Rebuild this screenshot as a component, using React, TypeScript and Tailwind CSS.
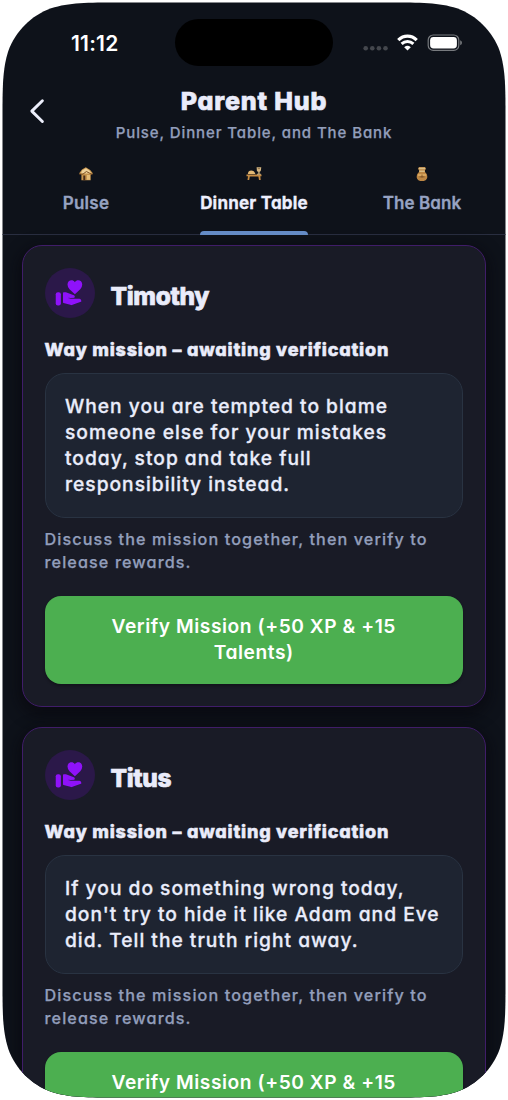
import React from "react";

function StatusBar() {
  return (
    <div className="flex h-[84px] items-start">
      <div className="w-[175px] pl-[71px] pt-[30px] font-['Inter'] text-[21px] leading-[27px] font-semibold tracking-[0.2px] text-white">11:12</div>
      <div className="mt-[19px] h-[47px] w-[158px] rounded-full bg-black" />
      <div className="ml-[30px] mt-[34px] flex h-[18px] items-start">
        <svg width="26" height="18" viewBox="0 0 26 18" fill="#44474d">
          <circle cx="2.7" cy="14.3" r="2.3" />
          <circle cx="9.3" cy="14.3" r="2.3" />
          <circle cx="15.9" cy="14.3" r="2.3" />
          <circle cx="22.5" cy="14.3" r="2.3" />
        </svg>
        <svg className="ml-[8px]" width="22" height="18" viewBox="0 0 22 18" fill="none" stroke="#fff">
          <path d="M1.3 6.1C6.6 .9 14.4 .9 19.7 6.1" strokeWidth="3.3" />
          <path d="M4.6 9.8C8 6.6 13 6.6 16.4 9.8" strokeWidth="3" />
          <path d="M10.5 16.6L7.2 13.2Q10.5 10.4 13.8 13.2Z" fill="#fff" stroke="none" />
        </svg>
        <svg className="ml-[8px]" width="36" height="18" viewBox="0 0 36 18">
          <rect x="1.2" y="1" width="30.6" height="15.4" rx="5" fill="none" stroke="#777a7e" strokeWidth="1.2" />
          <rect x="3.1" y="3" width="26.8" height="11.5" rx="3.4" fill="#fff" />
          <path d="M33.2 6.2Q35 7 35 8.7T33.2 11.2Z" fill="#777a7e" />
        </svg>
      </div>
    </div>
  );
}

function Header() {
  return (
    <header className="flex h-[74px] items-start">
      <div className="w-[100px] pl-[28px] pt-[14px]">
        <svg width="18" height="26" viewBox="0 0 18 26" fill="none" stroke="#eceefb" strokeWidth="2.9" strokeLinecap="round" strokeLinejoin="round">
          <path d="M14.4 2.7L3.8 13.1L14.4 23.5" />
        </svg>
      </div>
      <div className="w-[308px] text-center whitespace-nowrap">
        <h1 className="text-[25px] leading-[34px] font-extrabold tracking-[0.85px] text-[#eaecfa] [-webkit-text-stroke:0.7px_#eaecfa]">Parent Hub</h1>
        <p className="mt-[4px] text-[15px] leading-[22px] font-medium tracking-[0.9px] text-[#929ebb] [-webkit-text-stroke:0.25px_#929ebb]">Pulse, Dinner Table, and The Bank</p>
      </div>
    </header>
  );
}

function HouseIcon() {
  return (
    <svg className="shrink-0" width="16" height="16" viewBox="0 0 16 16">
      <path d="M1 7.5L4 3.6L7.8 1.2L12.2 4L15 7.5L12.7 8.4V14.2H3.4V8.2Z" fill="#c7954e" />
      <path d="M4 4.5L8 2.2L12 5L13 7.5H3Z" fill="#efd29a" />
      <path d="M1.3 8.1H5L8.4 5.5L14.4 8.6" fill="none" stroke="#7d4f23" />
      <path d="M5.3 9.5H7.3V14.2H5.3Z" fill="#4b2d19" />
      <path d="M9 9H12V13.8H9Z" fill="#e6bd77" />
    </svg>
  );
}

function TableIcon() {
  return (
    <svg className="shrink-0" width="16" height="16" viewBox="0 0 16 16">
      <path d="M.5 8.5H15.5V10.2H14.3L14.7 14H13L12.4 10.6H3.8L3.2 14H1.5L2 10.2H.5Z" fill="#c78c43" />
      <path d="M1.8 8Q2.2 4.6 5.2 4.6T9.4 8Z" fill="#e2b875" />
      <path d="M10.6 1.3H15.3L14.8 4.7Q14.2 5.8 13.6 5.8V7.7H14.9V8.7H11V7.7H12.3V5.8Q11.1 5.7 10.9 4.7Z" fill="#d3b581" />
      <path d="M11.8 2.6H14" stroke="#765530" strokeWidth=".7" />
    </svg>
  );
}

function MoneyIcon() {
  return (
    <svg className="shrink-0" width="16" height="16" viewBox="0 0 16 16">
      <path d="M5 1H11L12 2.8L11 4.3V6L12.7 8Q14.4 12 11.6 14.2Q8 16 4.4 14.2Q1.6 12 3.3 8L5 6V4.3L4 2.8Z" fill="#bd8744" />
      <path d="M4.8 2.4H11.2M5.3 5.3H10.7" stroke="#d7bc86" strokeWidth="1.5" />
      <path d="M3.9 9H12.1" stroke="#e0b067" strokeWidth="1.3" />
      <path d="M8 8.6V11.5M5.5 10.9H10.5" stroke="#6a421e" strokeWidth=".7" />
    </svg>
  );
}

function Tabs() {
  return (
    <nav className="flex h-[77px] justify-center border-b border-[#292e40] px-[2px] whitespace-nowrap">
      <div className="flex w-[168px] flex-col items-center pt-[8px]">
        <HouseIcon />
        <span className="mt-[8px] h-[26px] shrink-0 text-[17px] leading-[27px] font-semibold tracking-[0.3px] text-[#97a3c2] [-webkit-text-stroke:0.3px_#97a3c2]">Pulse</span>
      </div>
      <div className="flex w-[168px] flex-col items-center pt-[8px]">
        <TableIcon />
        <span className="mt-[8px] h-[26px] shrink-0 text-[17px] leading-[27px] font-bold tracking-[0.2px] text-[#eef0fe] [-webkit-text-stroke:0.3px_#eef0fe]">Dinner Table</span>
        <div className="relative mt-[15px] -mb-px h-[4px] w-[108px] shrink-0 rounded-t-[4px] bg-[#648bc6]" />
      </div>
      <div className="flex w-[168px] flex-col items-center pt-[8px]">
        <MoneyIcon />
        <span className="mt-[8px] h-[26px] shrink-0 text-[17px] leading-[27px] font-semibold tracking-[0.1px] text-[#97a3c2] [-webkit-text-stroke:0.3px_#97a3c2]">The Bank</span>
      </div>
    </nav>
  );
}

function GivingIcon() {
  return (
    <svg className="mr-[1px]" width="30" height="30" viewBox="0 0 24 24" fill="#8f12fa">
      <rect x="1.4" y="11.3" width="4.1" height="10.7" rx="1.7" />
      <path d="M7.8 12H9.3L15.7 14.3Q16.2 14.7 16 15.3L13 15.5L11.3 14.9L10.8 16.3L13 17.2H20.3Q21.2 17.5 21.3 18.4L14 21.1L7.8 19.4Z" stroke="#8f12fa" strokeWidth="1.2" strokeLinejoin="round" />
      <path d="M16.7 13L12.4 8.9Q10.8 7.2 10.8 5.2C10.8 1.6 15 .7 16.7 3.3C18.4 .7 22.6 1.6 22.6 5.2Q22.6 7.2 21 8.9Z" />
    </svg>
  );
}

function MissionCard({ name, lines }: { name: string; lines: string[] }) {
  return (
    <section className="rounded-[20px] border border-[#401d69] bg-[#191b26] pt-[21.5px] pr-[22px] pb-[21.5px] pl-[21.5px] whitespace-nowrap shadow-[0_5px_14px_4px_rgba(7,8,14,0.65)]">
      <div className="flex h-[51px] items-center">
        <div className="flex h-[50px] w-[50px] items-center justify-center rounded-full bg-[#2b1849]">
          <GivingIcon />
        </div>
        <h2 className="ml-[16px] pt-[5px] text-[24.5px] leading-[34px] font-extrabold tracking-[-0.35px] text-[#eaecfa] [-webkit-text-stroke:0.7px_#eaecfa]">{name}</h2>
      </div>
      <h3 className="mt-[18px] text-[18px] leading-[26px] font-extrabold tracking-[0.77px] text-[#eaecfa] [-webkit-text-stroke:0.5px_#eaecfa]">Way mission – awaiting verification</h3>
      <div className="mt-[10px] rounded-[20px] border border-[#293342] bg-[#1e2431] px-[19.5px] pt-[19px] pb-[20px] text-[19.2px] leading-[26.2px] font-medium tracking-[1px] text-[#eaedfb] [-webkit-text-stroke:0.3px_#eaedfb]">
        {lines.map((line) => (
          <div key={line}>{line}</div>
        ))}
      </div>
      <p className="mt-[10px] text-[16.2px] leading-[22.5px] font-medium tracking-[1.1px] text-[#929ebb] [-webkit-text-stroke:0.25px_#929ebb]">
        Discuss the mission together, then verify to<br />release rewards.
      </p>
      <button className="mt-[23px] block h-[88px] w-full rounded-[16px] bg-[#4caf50] pb-[2px] text-center text-[19.2px] leading-[26.2px] font-semibold tracking-[0.55px] text-white shadow-[0_2px_3px_rgba(0,0,0,0.3)]">
        Verify Mission (+50 XP &amp; +15<br />Talents)
      </button>
    </section>
  );
}

export default function App() {
  return (
    <div className="h-[1100px] w-[508px] overflow-hidden bg-white font-['Inter',sans-serif] [font-feature-settings:'cv11']">
      <main className="h-[1100px] w-[508px] overflow-hidden bg-[#0e121a] [clip-path:path('M120.2_2.5C86.3_2.5_69.4_2.5_51.1_8.3C31.2_15.5_15.5_31.2_8.3_51.1C2.5_69.4_2.5_86.3_2.5_120.2V979.8C2.5_1013.7_2.5_1030.6_8.3_1048.9C15.5_1068.8_31.2_1084.5_51.1_1091.7C69.4_1097.5_86.3_1097.5_120.2_1097.5H387.8C421.7_1097.5_438.6_1097.5_456.9_1091.7C476.8_1084.5_492.5_1068.8_499.7_1048.9C505.5_1030.6_505.5_1013.7_505.5_979.8V120.2C505.5_86.3_505.5_69.4_499.7_51.1C492.5_31.2_476.8_15.5_456.9_8.3C438.6_2.5_421.7_2.5_387.8_2.5Z')]">
        <StatusBar />
        <Header />
        <Tabs />
        <div className="flex flex-col gap-[20.5px] pt-[10px] pr-[22px] pl-[22px]">
          <MissionCard name="Timothy" lines={["When you are tempted to blame", "someone else for your mistakes", "today, stop and take full", "responsibility instead."]} />
          <MissionCard name="Titus" lines={["If you do something wrong today,", "don't try to hide it like Adam and Eve", "did. Tell the truth right away."]} />
        </div>
      </main>
    </div>
  );
}
